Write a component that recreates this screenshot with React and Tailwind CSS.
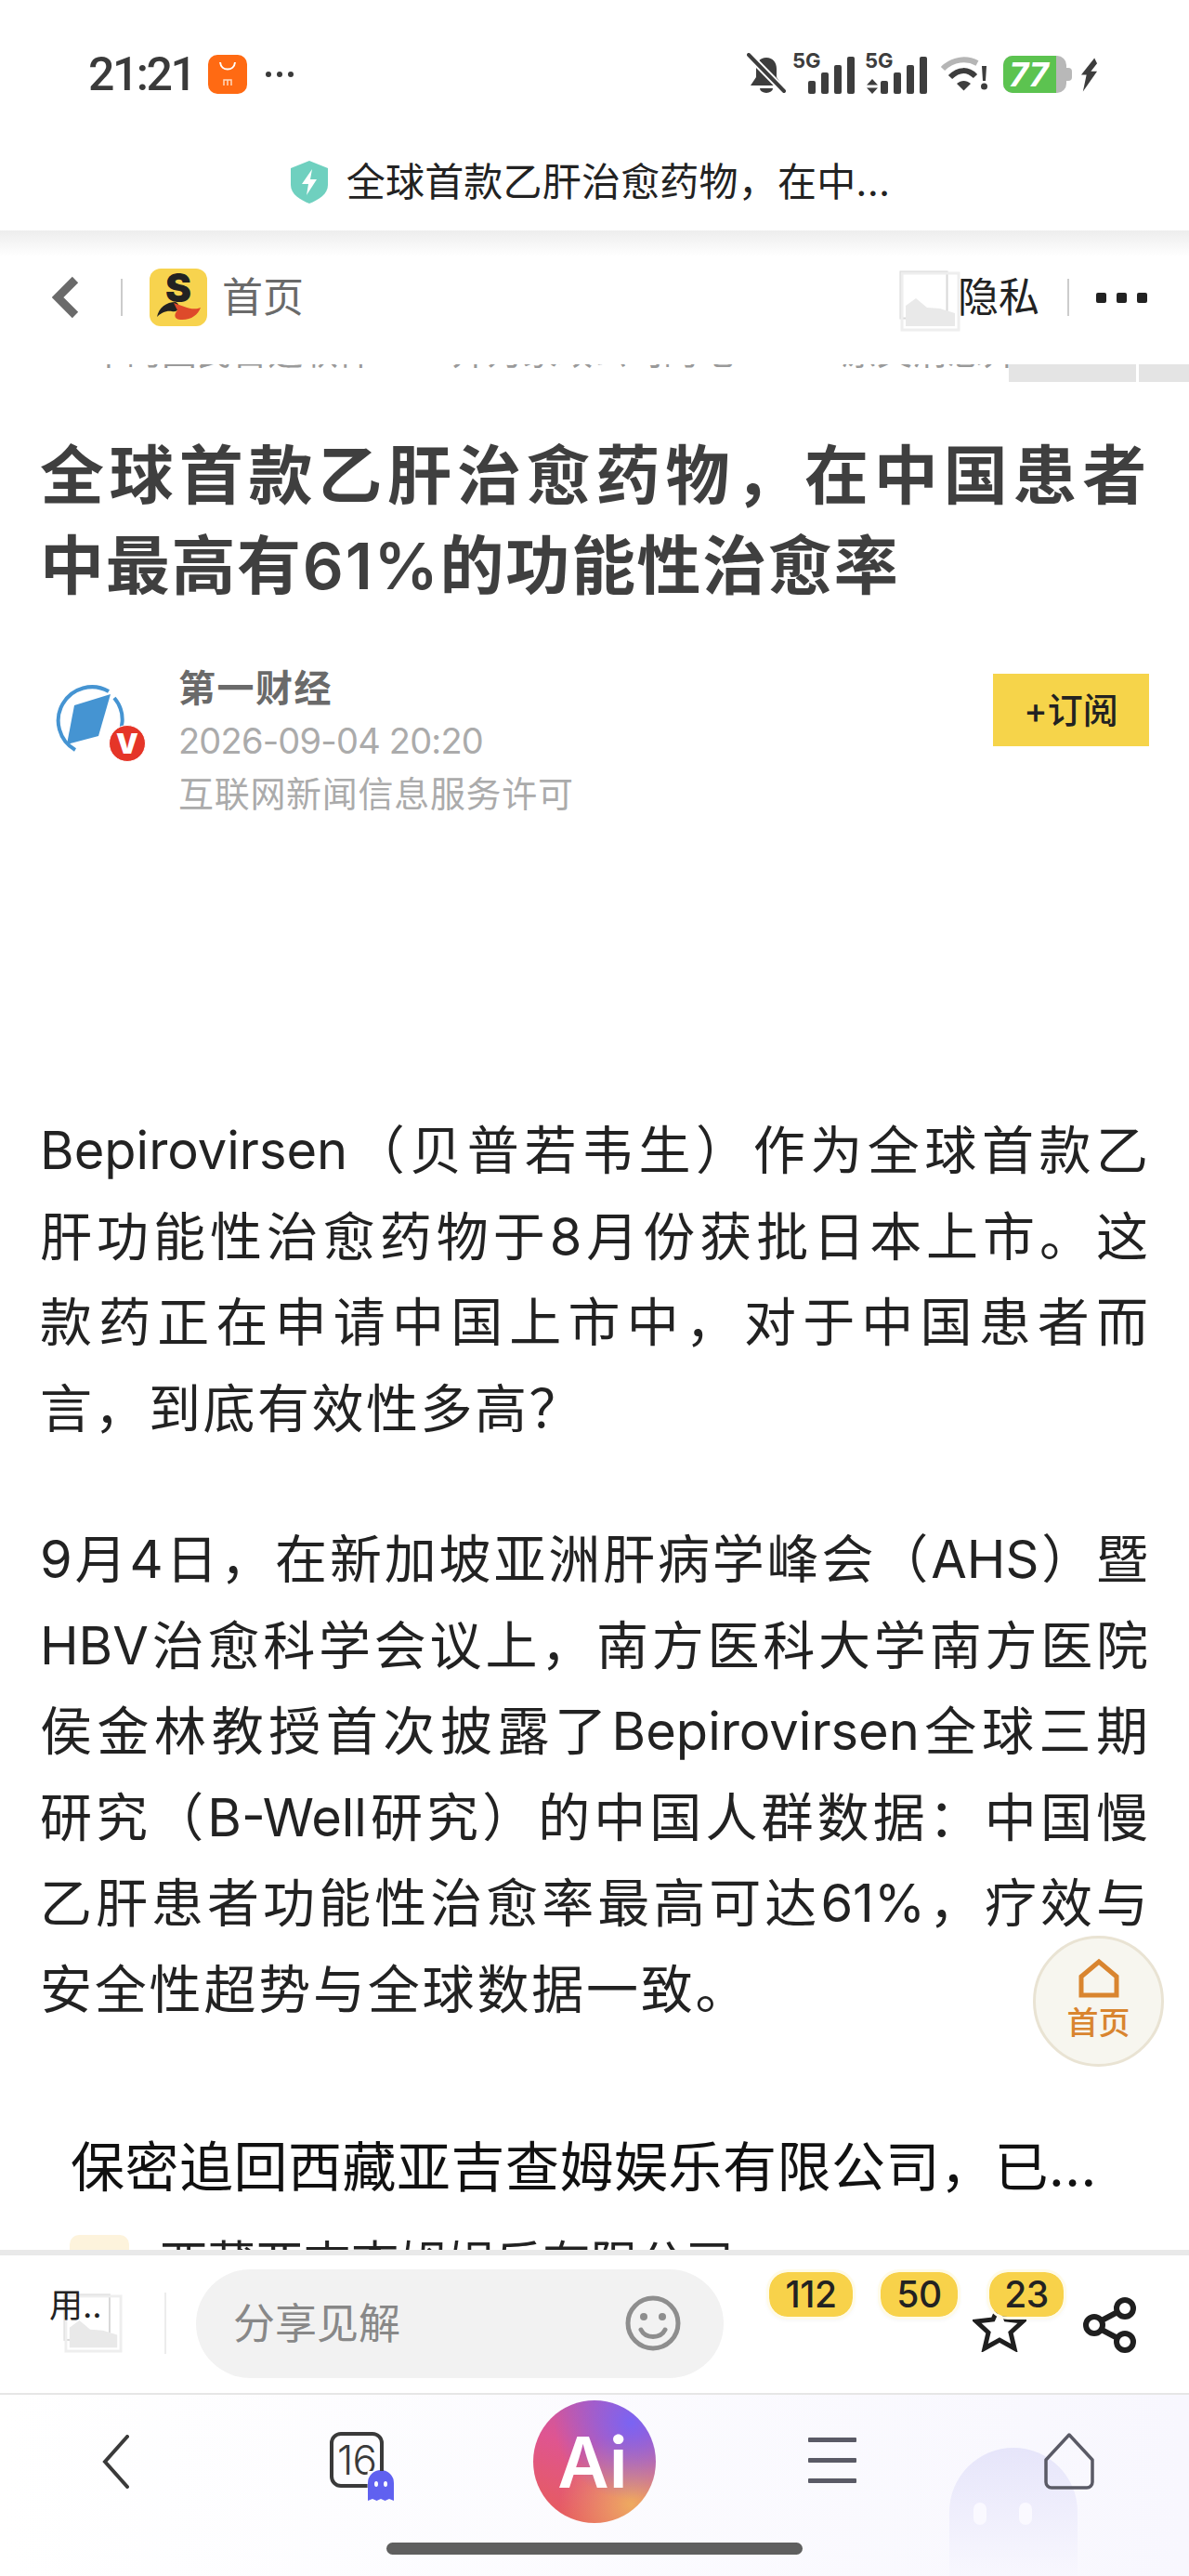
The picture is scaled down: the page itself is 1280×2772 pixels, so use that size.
import { Fragment } from "react";

const para1 = [
  "Bepirovirsen（贝普若韦生）作为全球首款乙",
  "肝功能性治愈药物于8月份获批日本上市。这",
  "款药正在申请中国上市中，对于中国患者而",
];
const para2 = [
  "9月4日，在新加坡亚洲肝病学峰会（AHS）暨",
  "HBV治愈科学会议上，南方医科大学南方医院",
  "侯金林教授首次披露了Bepirovirsen全球三期",
  "研究（B-Well研究）的中国人群数据：中国慢",
  "乙肝患者功能性治愈率最高可达61%，疗效与",
];

function Line({ children }) {
  return <div className="text-justify [text-align-last:justify]">{children}</div>;
}

function BrokenImage({ className }) {
  return (
    <svg viewBox="0 0 66 66" className={className} fill="none">
      <rect x="1.5" y="1.5" width="50" height="50" stroke="#d8d8d8" strokeWidth="2" fill="#fff" />
      <rect x="3" y="3" width="61" height="61" stroke="#eeeeee" strokeWidth="3" />
      <path d="M7 60V38L18 30L30 40L44 41L60 46V60Z" fill="#e9e9e9" />
    </svg>
  );
}

function Bars({ x = 0 }) {
  return (
    <>
      <rect x={x} y="26" width="8" height="14" rx="2" />
      <rect x={x + 14} y="17" width="8" height="23" rx="2" />
      <rect x={x + 28} y="9" width="8" height="31" rx="2" />
      <rect x={x + 42} y="0" width="8" height="40" rx="2" />
    </>
  );
}

function StatusIcons() {
  return (
    <div className="flex items-center">
      <svg viewBox="0 0 42 46" className="w-[42px] h-[46px]">
        <path d="M21 5c7 0 11 5 11 12v9l6 9H4l6-9v-9c0-7 4-12 11-12Z" fill="#3d3d3d" />
        <path d="M14 38h14a7 5 0 0 1-14 0Z" fill="#3d3d3d" />
        <path d="M1 1l39 40" stroke="#fff" strokeWidth="8" />
        <path d="M2 2l38 39" stroke="#3d3d3d" strokeWidth="4" strokeLinecap="round" />
      </svg>
      <div className="relative w-[67px] h-[46px] ml-[7px]">
        <span className="absolute left-0 -top-[3px] text-[22px] leading-[22px] font-bold text-[#3d3d3d]">5G</span>
        <svg viewBox="0 0 50 40" fill="#3d3d3d" className="absolute left-[17px] top-[4px] w-[50px] h-[40px]"><Bars /></svg>
      </div>
      <div className="relative w-[67px] h-[46px] ml-[11px]">
        <span className="absolute left-0 -top-[3px] text-[22px] leading-[22px] font-bold text-[#3d3d3d]">5G</span>
        <svg viewBox="0 0 12 16" fill="#3d3d3d" className="absolute left-[2px] top-[28px] w-[12px] h-[16px]">
          <path d="M6 0l6 6.5H0ZM6 16l6-6.5H0Z" />
        </svg>
        <svg viewBox="0 0 50 40" fill="#3d3d3d" className="absolute left-[17px] top-[4px] w-[50px] h-[40px]"><Bars /></svg>
      </div>
      <svg viewBox="0 0 54 40" className="w-[54px] h-[40px] ml-[14px]" fill="none">
        <path d="M3 14C14 3 29 2 40 8" stroke="#b5b5b5" strokeWidth="6" />
        <path d="M11 23C20 14 30 14 38 22" stroke="#3d3d3d" strokeWidth="6" />
        <path d="M18 30c5-4 10-4 15 0l-7.500 7.500Z" fill="#3d3d3d" />
        <path d="M45 11h5l-1 16h-3Z" fill="#3d3d3d" />
        <circle cx="47.500" cy="33" r="3.500" fill="#3d3d3d" />
      </svg>
      <div className="flex items-center ml-[14px]">
        <div className="relative w-[68px] h-[40px] rounded-[10px] bg-[#b8b8b8] overflow-hidden">
          <div className="w-[57px] h-full bg-[#5cc350] flex items-center justify-center text-[36px] font-bold italic text-white leading-none pr-[2px]">77</div>
        </div>
        <div className="w-[6px] h-[14px] rounded-r-[4px] bg-[#b8b8b8]" />
      </div>
      <svg viewBox="0 0 20 38" className="w-[19px] h-[37px] ml-[9px]" fill="#3d3d3d">
        <path d="M16 0L1 19h6L3 38l16-23h-7l7-9Z" />
      </svg>
    </div>
  );
}

function Logo() {
  return (
    <div className="relative w-[62px] h-[62px] rounded-[12px] bg-[#f7d34e] overflow-hidden flex justify-center">
      <span className="text-[42px] leading-[42px] font-black text-[#222]">S</span>
      <svg viewBox="0 0 62 62" className="absolute inset-0 w-[62px] h-[62px]">
        <path d="M8 52C10 42 18 36 28 36C34 38 32 48 24 46C18 45 12 48 8 52Z" fill="#222" />
        <path d="M26 37C36 40 46 46 55 42C52 50 44 56 33 55C25 54 27 48 30 45Z" fill="#de4a2a" />
      </svg>
    </div>
  );
}

function Avatar() {
  return (
    <div className="relative w-[100px] h-[100px]">
      <svg viewBox="0 0 78 78" className="absolute left-0 top-0 w-[78px] h-[78px]" fill="none">
        <path d="M24 71A36 36 0 0 1 60 8" stroke="#4594d2" strokeWidth="4" />
        <path d="M66 15A36 36 0 0 1 56 70 36 36 0 0 1 20 72" stroke="#4594d2" strokeWidth="4" strokeDasharray="55 60" />
        <path d="M23 23L62 11L49 56L15 65Z" fill="#4594d2" />
      </svg>
      <div className="absolute left-[60px] top-[44px] w-[40px] h-[40px] rounded-full bg-[#e53528] border border-white flex items-center justify-center text-[30px] leading-none font-black text-white">V</div>
    </div>
  );
}

function Badge({ className, children }) {
  return (
    <div className={"absolute top-[18px] h-[48px] rounded-[20px] bg-[#f8d24a] outline-[3px] outline-[#fffbe8] shadow-[0_2px_6px_rgba(0,0,0,0.08)] flex items-center justify-center text-[39px] font-medium text-[#222] tracking-[-0.5px] " + className}>
      {children}
    </div>
  );
}

function Ghost({ className, color, eye }) {
  return (
    <svg viewBox="0 0 28 33" className={className}>
      <path d="M0 33V14a14 14 0 0 1 28 0v19l-5-2-4.500 2-4.500-2-4.500 2-4.500-2Z" fill={color} />
      <ellipse cx="9" cy="15" rx="2" ry="3" fill={eye} />
      <ellipse cx="19" cy="15" rx="2" ry="3" fill={eye} />
    </svg>
  );
}

export default function App() {
  return (
    <div className="relative flex flex-col w-[1280px] h-[2772px] overflow-hidden bg-white [font-family:Inter,'Noto_Sans_CJK_SC',sans-serif]">
      {/* status bar */}
      <div className="flex items-center justify-between h-[160px] pl-[95px] pr-[98px] shrink-0">
        <div className="flex items-center">
          <span className="w-[110px] text-[50px] leading-none font-medium text-[#3a3a3a] tracking-[-2.500px] whitespace-nowrap [font-family:Roboto,sans-serif]">21:21</span>
          <div className="relative ml-[19px] w-[42px] h-[42px] rounded-[10px] bg-[#ff6a13]">
            <svg viewBox="0 0 42 42" className="w-[42px] h-[42px]" fill="none">
              <path d="M13 8c1 10 15 10 16 0" stroke="#fff" strokeWidth="2" />
              <path d="M17 33v-6h8v6M21 27v6" stroke="#ffd9bf" strokeWidth="1.500" />
            </svg>
          </div>
          <div className="ml-[20px] flex gap-[6px]">
            <span className="w-[6px] h-[6px] rounded-full bg-[#3a3a3a]" />
            <span className="w-[6px] h-[6px] rounded-full bg-[#3a3a3a]" />
            <span className="w-[6px] h-[6px] rounded-full bg-[#3a3a3a]" />
          </div>
        </div>
        <StatusIcons />
      </div>

      {/* address row */}
      <div className="flex items-center justify-center h-[88px] -mt-[8px] shrink-0 pr-[9px]">
        <svg viewBox="0 0 40 46" className="w-[40px] h-[46px]">
          <path d="M20 0L40 8V26C40 36 30 42 20 46C10 42 0 36 0 26V8Z" fill="#6fd0bf" />
          <path d="M23 9L12 25h7l-2 12 11-17h-7Z" fill="#fff" />
        </svg>
        <span className="ml-[20px] text-[42px] leading-none text-[#222] tracking-[0.200px]">全球首款乙肝治愈药物，在中...</span>
      </div>
      <div className="h-[28px] shrink-0 bg-gradient-to-b from-[#ededed] to-white mt-[8px]" />

      {/* site nav */}
      <div className="flex items-center h-[116px] shrink-0 pb-[28px] pl-[56px] pr-[45px] text-[44px] leading-none">
        <svg viewBox="0 0 30 46" className="w-[30px] h-[46px]" fill="none">
          <path d="M25 4L6 23L25 42" stroke="#6a6a6a" strokeWidth="9" />
        </svg>
        <div className="ml-[44px] w-[2px] h-[40px] bg-[#cccccc]" />
        <div className="ml-[29px]"><Logo /></div>
        <span className="ml-[16px] text-[#6a6a6a]">首页</span>
        <div className="relative ml-auto flex items-center">
          <BrokenImage className="w-[66px] h-[66px] -mr-[3px] translate-y-[4px]" />
          <span className="text-[#222]">隐私</span>
        </div>
        <div className="ml-[30px] w-[2px] h-[40px] bg-[#cccccc]" />
        <div className="ml-[29px] flex gap-[11px]">
          <span className="w-[11px] h-[11px] bg-[#222] rounded-[2px]" />
          <span className="w-[11px] h-[11px] bg-[#222] rounded-[2px]" />
          <span className="w-[11px] h-[11px] bg-[#222] rounded-[2px]" />
        </div>
      </div>

      {/* article */}
      <div className="flex-1 min-h-0 overflow-hidden">
        <div className="relative flex h-[19px] overflow-hidden">
          <div className="flex -mt-[34px] pl-[98px] text-[38px] leading-[40px] text-[#9a9a9a] whitespace-nowrap h-[40px]">
            <span className="w-[388px]">中的国民首选软件</span>
            <span className="w-[420px]">并为家政公司的地</span>
            <span>原文消息并招待</span>
          </div>
          <div className="absolute left-[1086px] top-0 w-[137px] h-[19px] bg-[#e4e4e4]" />
          <div className="absolute left-[1226px] top-0 w-[54px] h-[19px] bg-[#e4e4e4]" />
        </div>

        <div className="pl-[43px] pr-[44px]">
          <h1 className="mt-[53px] text-[69px] leading-[97px] font-semibold text-[#3f3f3f] tracking-[1.700px]">
            <Line>全球首款乙肝治愈药物，在中国患者</Line>
            <div>中最高有61%的功能性治愈率</div>
          </h1>

          <div className="flex mt-[54px] h-[171px]">
            <div className="ml-[14px] mt-[24px]"><Avatar /></div>
            <div className="ml-[35px] leading-[57px]">
              <div className="text-[40px] font-bold text-[#6a6a6a] tracking-[1.500px]">第一财经</div>
              <div className="text-[38px] text-[#ababab] tracking-[-0.800px]">2026-09-04 20:20</div>
              <div className="text-[38px] text-[#ababab] tracking-[0.700px]">互联网新闻信息服务许可</div>
            </div>
            <div className="ml-auto -mr-[1px] mt-[13px] w-[168px] h-[78px] bg-[#f6d44a] flex items-center justify-center text-[38px] font-medium text-[#222]">
              +订阅
            </div>
          </div>

          <div className="mt-[309px] text-[56px] leading-[92.500px] text-[#222]">
            {para1.map((l) => (
              <Fragment key={l}><Line>{l}</Line></Fragment>
            ))}
            <div className="tracking-[2.500px]">言，到底有效性多高？</div>
          </div>

          <div className="mt-[70px] text-[56px] leading-[92.500px] text-[#222]">
            {para2.map((l) => (
              <Fragment key={l}><Line>{l}</Line></Fragment>
            ))}
            <div className="tracking-[2.800px]">安全性超势与全球数据一致。</div>
          </div>
        </div>

        <div className="mt-[105px] pl-[76px] text-[58px] leading-[80px] text-[#111] tracking-[0.500px] whitespace-nowrap">保密追回西藏亚吉查姆娱乐有限公司，已...</div>
        <div className="flex items-start mt-[33px] pl-[75px]">
          <div className="w-[64px] h-[64px] rounded-[10px] bg-[#fdf3dc]" />
          <span className="ml-[33px] text-[51.500px] leading-[60px] text-[#222] whitespace-nowrap">西藏亚吉查姆娱乐有限公司</span>
        </div>
      </div>

      {/* comment bar */}
      <div className="h-[6px] shrink-0 bg-[#e9e9e9]" />
      <div className="relative flex items-center h-[150px] shrink-0 border-b-[2px] border-[#e6e6e6] pb-[2px]">
        <div className="relative ml-[68px] w-[64px] h-[64px]">
          <BrokenImage className="w-[64px] h-[64px]" />
          <span className="absolute -left-[15px] -top-[7px] text-[36px] leading-[40px] text-[#222] whitespace-nowrap">用..</span>
        </div>
        <div className="ml-[45px] w-[2px] h-[66px] bg-[#ececec]" />
        <div className="ml-[32px] flex items-center justify-between w-[568px] h-[117px] rounded-full bg-[#f2f2f2] pl-[40px] pr-[46px]">
          <span className="text-[45px] leading-none text-[#888]">分享见解</span>
          <svg viewBox="0 0 60 62" className="w-[60px] h-[62px]" fill="none">
            <circle cx="30" cy="31" r="27" stroke="#8e8e8e" strokeWidth="5" />
            <circle cx="20" cy="24" r="4" fill="#8e8e8e" />
            <circle cx="40" cy="24" r="4" fill="#8e8e8e" />
            <path d="M17 38c5 10 21 10 26 0" stroke="#8e8e8e" strokeWidth="5" strokeLinecap="round" />
          </svg>
        </div>
        <svg viewBox="0 0 58 56" className="ml-[268px] mt-[6px] w-[58px] h-[56px]" fill="none">
          <path d="M29 5L36 21L54 23L41 35L45 52L29 43L13 52L17 35L4 23L22 21Z" stroke="#1f1f1f" strokeWidth="5" />
        </svg>
        <svg viewBox="0 0 60 60" className="ml-[60px] mt-[4px] w-[60px] h-[60px]" fill="none" stroke="#1f1f1f" strokeWidth="6">
          <circle cx="46" cy="12" r="9" />
          <circle cx="13" cy="30" r="9" />
          <circle cx="46" cy="48" r="9" />
          <path d="M21 25L38 16M21 35L38 44" />
        </svg>
        <Badge className="left-[828px] w-[90px]">112</Badge>
        <Badge className="left-[948px] w-[83px]">50</Badge>
        <Badge className="left-[1065px] w-[80px]">23</Badge>
      </div>

      {/* browser nav */}
      <div className="relative flex h-[195px] shrink-0 items-start bg-gradient-to-r from-white to-[#f8f7fe]">
        {/* decoration behind the icons */}
        <div className="absolute left-[1022px] top-[57px] w-[138px] h-[138px] rounded-t-full bg-gradient-to-b from-[#e6e5fa] to-[#f8f7fe]">
          <div className="absolute left-[26px] top-[59px] w-[14px] h-[24px] rounded-full bg-[#faf9ff]" />
          <div className="absolute left-[75px] top-[59px] w-[14px] h-[24px] rounded-full bg-[#faf9ff]" />
        </div>
        <svg viewBox="0 0 30 58" className="ml-[110px] mt-[43px] w-[30px] h-[58px]" fill="none">
          <path d="M27 2L3 29L27 56" stroke="#3a3a3a" strokeWidth="4" strokeLinecap="round" />
        </svg>
        <div className="relative ml-[215px] mt-[40px] w-[58px] h-[60px] rounded-[12px] border-[4px] border-[#3a3a3a] flex items-center justify-center text-[44px] leading-none font-light tracking-[-1px] text-[#3a3a3a] [clip-path:polygon(0_0,100%_0,100%_70%,70%_70%,70%_100%,0_100%)]">
          16
        </div>
        <Ghost className="-ml-[17px] mt-[81px] w-[28px] h-[33px]" color="#6061f0" eye="#fff" />
        <div className="ml-[150px] mt-[6px] w-[132px] h-[132px] rounded-full flex items-center justify-center pr-[4px] text-[76px] leading-none font-semibold text-white bg-[radial-gradient(circle_at_80%_18%,#7a64f3_0%,transparent_55%),radial-gradient(circle_at_80%_85%,#eeaa60_0%,transparent_50%),linear-gradient(200deg,#b458b8,#df5590_45%,#e85d55)]">
          Ai
        </div>
        <div className="ml-[164px] mt-[46px] flex flex-col gap-[17px] w-[52px]">
          <div className="h-[5px] rounded-[1px] bg-[#5a5a66]" />
          <div className="h-[5px] rounded-[1px] bg-[#5a5a66]" />
          <div className="h-[5px] rounded-[1px] bg-[#5a5a66]" />
        </div>
        <svg viewBox="0 0 56 62" className="relative ml-[201px] mt-[40px] w-[56px] h-[62px]" fill="none">
          <path d="M28 3L53 30V54a6 6 0 0 1-6 6H9a6 6 0 0 1-6-6V30Z" stroke="#5a5a66" strokeWidth="3.500" strokeLinejoin="round" />
        </svg>
        <div className="absolute left-[416px] top-[159px] w-[448px] h-[13px] rounded-full bg-[#5f5f5f]" />
      </div>

      {/* floating home button */}
      <div className="absolute left-[1112px] top-[2083px] w-[141px] h-[141px] rounded-full bg-[#f7f6ef] border-[3px] border-[#e9e3d3] flex flex-col items-center pt-[21px]">
        <svg viewBox="0 0 44 44" className="w-[44px] h-[44px]" fill="none">
          <path d="M22 4L41 20V40H3V20Z" stroke="#d9852f" strokeWidth="5" />
        </svg>
        <span className="mt-[8px] text-[34px] leading-[36px] font-medium text-[#d9852f]">首页</span>
      </div>
    </div>
  );
}
